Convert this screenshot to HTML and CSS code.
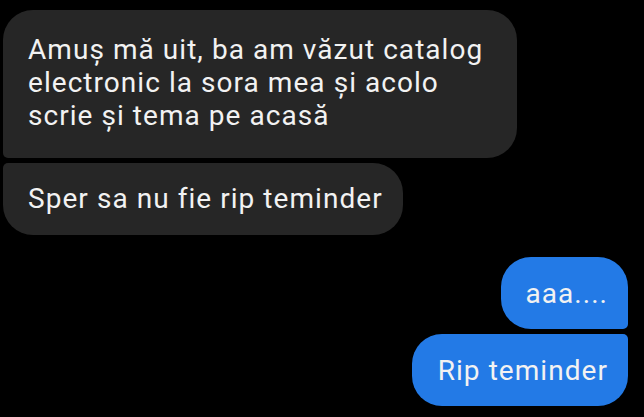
FILE: index.html
```html
<!DOCTYPE html>
<html lang="ro">
<head>
<meta charset="utf-8">
<link rel="stylesheet" href="styles.css">
</head>
<body>
<div class="chat">
  <div class="group in">
    <div class="bubble in first">Amuș mă uit, ba am văzut catalog<br>electronic la sora mea și acolo<br>scrie și tema pe acasă</div>
    <div class="bubble in last">Sper sa nu fie rip teminder</div>
  </div>
  <div class="group out">
    <div class="bubble out first">aaa....</div>
    <div class="bubble out last">Rip teminder</div>
  </div>
</div>
</body>
</html>
```
FILE: styles.css
```css
html, body {
  margin: 0;
  padding: 0;
  background: #000;
  width: 644px;
  height: 417px;
  overflow: hidden;
}
.chat {
  display: flex;
  flex-direction: column;
  gap: 22px;
  padding: 10px 16px 0 3px;
  font-family: Roboto, "Noto Sans", sans-serif;
  font-size: 28px;
  letter-spacing: 1.05px;
  line-height: 33px;
  color: #f2f2f2;
}
.group {
  display: flex;
  flex-direction: column;
  gap: 5px;
}
.group.in { align-items: flex-start; }
.group.out { align-items: flex-end; gap: 5px; }
.bubble {
  padding: 19px 20px 20px 25px;
  border-radius: 30px;
}
.bubble.in { background: #262626; }
.bubble.out { background: #237ae6; padding: 20px 20px 19px 26px; }
.bubble.in.first { border-bottom-left-radius: 5px; padding-top: 23px; padding-bottom: 26px; padding-right: 34px; }
.bubble.in.last { border-top-left-radius: 5px; }
.bubble.out.first { border-bottom-right-radius: 5px; padding-left: 24px; }
.bubble.out.last { border-top-right-radius: 5px; }
```
